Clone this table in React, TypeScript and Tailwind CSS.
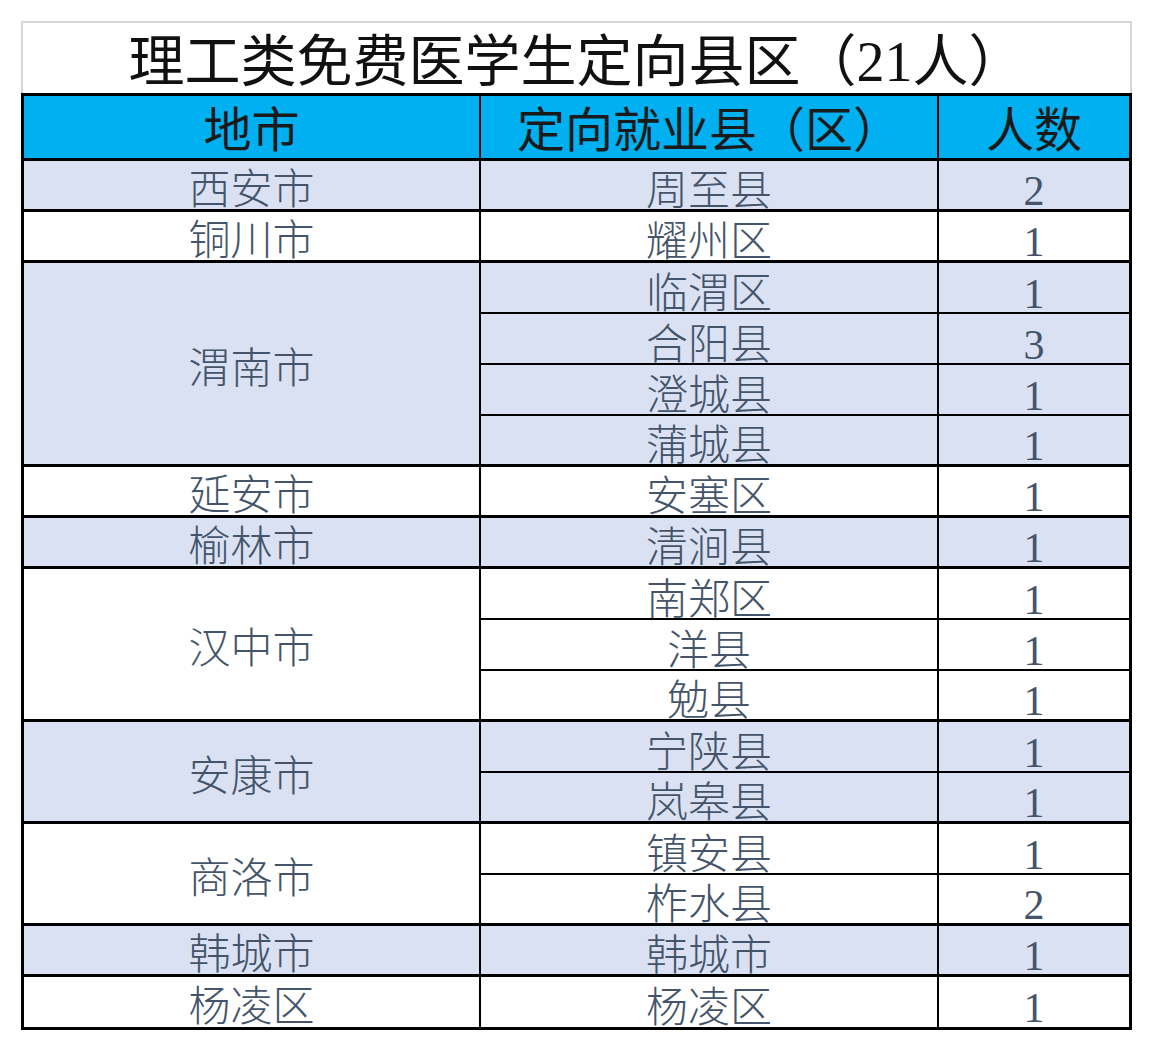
type Row = [string, number];

type Group = {
    city: string;
    shaded: boolean;
    rows: Row[];
};

const groups: Group[] = [
    { city: "西安市", shaded: true, rows: [["周至县", 2]] },
    { city: "铜川市", shaded: false, rows: [["耀州区", 1]] },
    {
        city: "渭南市",
        shaded: true,
        rows: [
            ["临渭区", 1],
            ["合阳县", 3],
            ["澄城县", 1],
            ["蒲城县", 1],
        ],
    },
    { city: "延安市", shaded: false, rows: [["安塞区", 1]] },
    { city: "榆林市", shaded: true, rows: [["清涧县", 1]] },
    {
        city: "汉中市",
        shaded: false,
        rows: [
            ["南郑区", 1],
            ["洋县", 1],
            ["勉县", 1],
        ],
    },
    {
        city: "安康市",
        shaded: true,
        rows: [
            ["宁陕县", 1],
            ["岚皋县", 1],
        ],
    },
    {
        city: "商洛市",
        shaded: false,
        rows: [
            ["镇安县", 1],
            ["柞水县", 2],
        ],
    },
    { city: "韩城市", shaded: true, rows: [["韩城市", 1]] },
    { city: "杨凌区", shaded: false, rows: [["杨凌区", 1]] },
];

// group heights, 51px per row
const groupHeight: Record<number, string> = {
    1: "h-[51px]",
    2: "h-[102px]",
    3: "h-[153px]",
    4: "h-[204px]",
};

const font = {
    fontFamily: '"Liberation Serif", "Noto Sans CJK SC", serif',
};

export default function App() {
    return (
        <div
            className="w-[1154px] h-[1053px] bg-white pt-[21px] pl-[21px]"
            style={font}
        >
            <div className="w-[1111px]">
                <div className="h-[72px] border-t-2 border-x-2 border-[#d6d6d6] flex items-center justify-center pt-[8px] text-[56px] leading-none text-[#111]">
                    理工类免费医学生定向县区（21人）
                </div>

                <div className="border-[3px] border-black">
                    <div className="flex h-[65px] bg-[#00b0f0] border-b-[3px] border-black text-[48px] leading-none text-[#1a1a1a]">
                        <div className="w-[457px] border-r-2 border-black flex items-center justify-center pt-2">
                            地市
                        </div>
                        <div className="w-[458px] border-r-2 border-black flex items-center justify-center pt-2">
                            定向就业县（区）
                        </div>
                        <div className="flex-1 flex items-center justify-center pt-2">
                            人数
                        </div>
                    </div>

                    {groups.map((group, gi) => {
                        const lastGroup = gi === groups.length - 1;
                        const bg = group.shaded ? "bg-[#d9e1f2]" : "bg-white";
                        const h = lastGroup ? "h-[50px]" : groupHeight[group.rows.length];
                        return (
                            <div
                                key={group.city + gi}
                                className={`flex ${h} text-[42px] leading-none text-[#44546a] font-light ${bg}`}
                            >
                                <div
                                    className={
                                        lastGroup
                                            ? "w-[457px] border-r-2 border-black flex items-center justify-center pt-[10px]"
                                            : "w-[457px] border-r-2 border-b-[3px] border-black flex items-center justify-center pt-[10px]"
                                    }
                                >
                                    {group.city}
                                </div>
                                <div className="flex-1 flex flex-col">
                                    {group.rows.map(([county, count], ri) => {
                                        const lastInGroup =
                                            ri === group.rows.length - 1;
                                        let rowCls =
                                            "flex h-[51px] shrink-0 border-b-2 border-black";
                                        if (lastInGroup && lastGroup) {
                                            rowCls = "flex h-[50px] shrink-0";
                                        } else if (lastInGroup) {
                                            rowCls =
                                                "flex h-[51px] shrink-0 border-b-[3px] border-black";
                                        }
                                        return (
                                            <div key={county} className={rowCls}>
                                                <div className="w-[458px] border-r-2 border-black flex items-center justify-center pt-3">
                                                    {county}
                                                </div>
                                                <div className="flex-1 flex items-center justify-center pt-3">
                                                    {count}
                                                </div>
                                            </div>
                                        );
                                    })}
                                </div>
                            </div>
                        );
                    })}
                </div>
            </div>
        </div>
    );
}
